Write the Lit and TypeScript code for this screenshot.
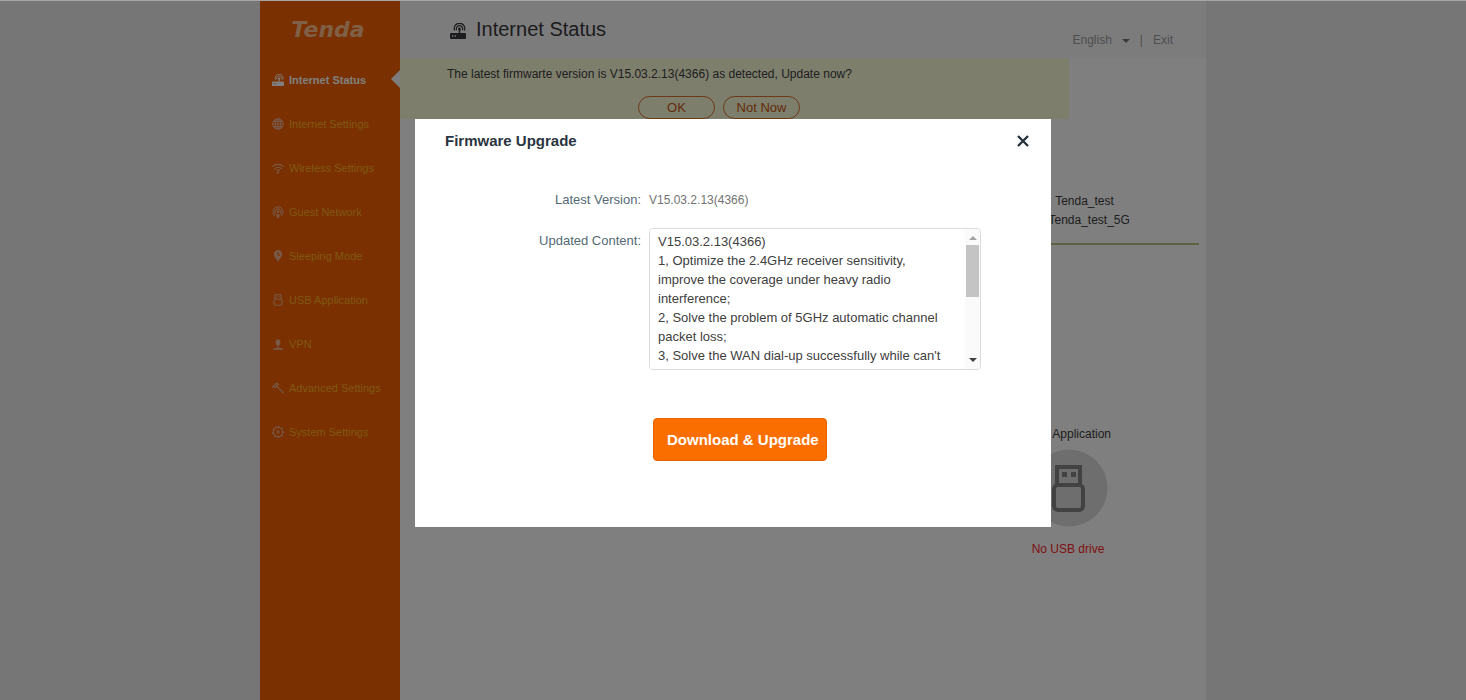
import { LitElement, html, svg, css } from "lit";
import { customElement, state } from "lit/decorators.js";

const routerIcon = svg`
  <rect x="0" y="10" width="16" height="6" rx="1"/>
  <path d="M9.5 10V6" fill="none" stroke="currentColor" stroke-width="1.6"/>
  <circle cx="9.500" cy="6" r="1.400"/>
  <path d="M6.600 7.200a3.200 3.200 0 1 1 5.800 0M4.600 7.600a5.300 5.300 0 1 1 9.800 0" fill="none" stroke="currentColor" stroke-width="1.200"/>
  <path d="M2 13h1.300M4.600 13h1.300" stroke="var(--hole)" stroke-width="1.300"/>`;

const icons: Record<string, unknown> = {
  status: routerIcon,
  globe: svg`<g fill="none" stroke="currentColor" stroke-width="1.400"><circle cx="8" cy="8" r="7"/><ellipse cx="8" cy="8" rx="3.400" ry="7"/><path d="M8 1v14M1 8h14M2.400 4.500h11.200M2.400 11.500h11.200"/></g>`,
  wifi: svg`<g fill="none" stroke="currentColor" stroke-width="1.700"><path d="M.7 6.200a10.500 10.500 0 0 1 14.600 0M3.200 9a7 7 0 0 1 9.600 0M5.600 11.600a3.600 3.600 0 0 1 4.800 0"/></g><circle cx="8" cy="14" r="1.500"/>`,
  guest: svg`<g fill="none" stroke="currentColor" stroke-width="1.400"><path d="M4 13.400a6.800 6.800 0 1 1 8 0M5 10.600a4 4 0 1 1 6 0"/></g><circle cx="8" cy="7.600" r="1.800"/><path d="M5.800 10.500h4.400L9.400 16H6.600z"/>`,
  sleep: svg`<path fill-rule="evenodd" d="M8 0a5.600 5.600 0 0 1 5.600 5.600C13.600 9.500 9.500 12 8 16 6.500 12 2.400 9.500 2.400 5.600A5.600 5.600 0 0 1 8 0zM7.300 2.500v4l3 1.600.6-1-2.300-1.300V2.500z"/>`,
  usb: svg`<g fill="none" stroke="currentColor" stroke-width="1.500"><path d="M4 7V1h8v6"/><rect x="2.800" y="7" width="10.400" height="8" rx="1.500"/></g><path d="M5.800 3h1.600v1.600H5.800zM8.600 3h1.600v1.600H8.600z"/>`,
  vpn: svg`<path d="M8 1.500c2.200 0 3.300 1.700 3.300 3.800S10 9.300 9.200 9.800v2H6.800v-2C6 9.300 4.700 7.400 4.700 5.300S5.800 1.500 8 1.500z"/><path d="M1 15.500c0-1.700 3.500-3 7-3s7 1.300 7 3z"/>`,
  tool: svg`<path fill="none" stroke="currentColor" stroke-width="1.700" d="M1 6.500 5.800 1.600 8.500 3 4 7.500zM6.500 5.500l8.800 9.300"/>`,
  gear: svg`<g fill="none" stroke="currentColor" stroke-width="1.400"><circle cx="8" cy="8" r="6.400"/><circle cx="8" cy="8" r="1.600"/><path stroke-width="2" stroke-dasharray="2 3" d="M8 .9a7.100 7.100 0 1 1 0 14.200A7.100 7.100 0 1 1 8 .9"/></g>`,
};

const menu = [
  { icon: "status", label: "Internet Status" },
  { icon: "globe", label: "Internet Settings" },
  { icon: "wifi", label: "Wireless Settings" },
  { icon: "guest", label: "Guest Network" },
  { icon: "sleep", label: "Sleeping Mode" },
  { icon: "usb", label: "USB Application" },
  { icon: "vpn", label: "VPN" },
  { icon: "tool", label: "Advanced Settings" },
  { icon: "gear", label: "System Settings" },
];

const notes = `V15.03.2.13(4366)
1, Optimize the 2.4GHz receiver sensitivity, improve the coverage under heavy radio interference;
2, Solve the problem of 5GHz automatic channel packet loss;
3, Solve the WAN dial-up successfully while can't`;

@customElement("side-menu")
class SideMenu extends LitElement {
  @state() active = 0;

  static styles = css`
    :host { display: block; background: #f46000; --hole: #f46000; }
    .logo {
      padding-top: 18px; text-align: center; color: #ffbf8c;
      font: italic bold 22px/24px "DejaVu Sans", sans-serif;
      margin-right: 4px;
    }
    nav { padding-top: 16px; }
    a {
      display: flex; align-items: center; gap: 5px; height: 44px; padding-left: 12px;
      position: relative; color: #ffb028; font-size: 11px; text-decoration: none;
    }
    svg { width: 12px; height: 12px; fill: currentColor; color: #f0b08c; flex: none; }
    .active { color: #fff; font-weight: bold; }
    .active svg { color: #fff; }
    .active::after {
      content: ""; position: absolute; right: 0; top: 12px;
      border: 9px solid transparent; border-left: 0; border-right-color: #fafafc;
    }
  `;

  render() {
    return html`
      <div class="logo">Tenda</div>
      <nav>
        ${menu.map((m, i) => html`
          <a href="#" class=${i === this.active ? "active" : ""} @click=${() => (this.active = i)}>
            <svg viewBox="0 0 16 16" aria-hidden="true">${icons[m.icon]}</svg>${m.label}
          </a>`)}
      </nav>`;
  }
}

@customElement("upgrade-dialog")
class UpgradeDialog extends LitElement {
  static styles = css`
    :host { display: block; width: 636px; max-width: 95vw; background: #fff; padding-bottom: 66px; }
    header { display: flex; justify-content: space-between; align-items: center; padding: 10px 20px 0 30px; }
    h2 { margin: 0; font-size: 15px; line-height: 24px; color: #2a3440; }
    .close { border: 0; background: none; padding: 0; width: 16px; height: 16px; display: grid; place-items: center; }
    .close svg { width: 12px; height: 12px; }
    .form { display: grid; grid-template-columns: 226px 332px; column-gap: 8px; padding-top: 37px; row-gap: 18px; }
    .label { text-align: right; font-size: 13px; line-height: 20px; color: #536a74; }
    .notes-label { padding-top: 3px; }
    .value { font-size: 12px; line-height: 20px; color: #747474; }
    .notes { display: flex; height: 142px; border: 1px solid #dcdcdc; border-radius: 4px; box-sizing: border-box; overflow: hidden; }
    textarea {
      flex: 1; min-width: 0; border: 0; outline: 0; resize: none; scrollbar-width: none; background: #fff;
      padding: 3px 14px 3px 8px; color: #404040; font: 13px/19px "Liberation Sans", Arial, sans-serif;
    }
    .bar { width: 15px; background: #fafafa; display: flex; flex-direction: column; align-items: center; padding: 0 1px; box-sizing: border-box; }
    .bar svg { width: 8px; height: 16px; flex: none; }
    .thumb { width: 13px; height: 52px; background: #c4c4c4; margin-bottom: auto; }
    .go {
      margin: 48px 0 0 238px; padding: 0 7px 0 13px; height: 43px; display: block; border: 1px solid #e86400;
      border-radius: 4px; background: #fa6e00; color: #fff; white-space: nowrap;
      font: bold 15px/20px "Liberation Sans", Arial, sans-serif;
    }
  `;

  render() {
    return html`
      <header>
        <h2>Firmware Upgrade</h2>
        <button class="close" aria-label="Close">
          <svg viewBox="0 0 12 12"><path d="M1 1l10 10M11 1L1 11" stroke="#26333c" stroke-width="2.400"/></svg>
        </button>
      </header>
      <div class="form">
        <span class="label">Latest Version:</span>
        <span class="value">V15.03.2.13(4366)</span>
        <label class="label notes-label" for="notes">Updated Content:</label>
        <div class="notes">
          <textarea id="notes" readonly .value=${notes}></textarea>
          <div class="bar" aria-hidden="true">
            <svg viewBox="0 0 8 16"><path d="M0 11l4-4 4 4z" fill="#a3a3a3"/></svg>
            <div class="thumb"></div>
            <svg viewBox="0 0 8 16"><path d="M0 5l4 4 4-4z" fill="#404040"/></svg>
          </div>
        </div>
      </div>
      <button class="go">Download &amp; Upgrade</button>`;
  }
}

@customElement("app-root")
class AppRoot extends LitElement {
  static styles = css`
    :host {
      display: block; min-height: 100vh; background: #ececec; color: #3c3c3c;
      font: 12px/19px "Liberation Sans", Arial, sans-serif;
    }
    .page { max-width: 946px; min-height: 100vh; margin: 0 auto; display: grid; grid-template-columns: 140px 1fr; }
    main { background: #fff; }
    .top { display: flex; justify-content: space-between; height: 58px; background: #f9f9fb; padding: 0 33px 0 50px; box-sizing: border-box; --hole: #f9f9fb; }
    h1 { display: flex; gap: 10px; margin: 0; padding-top: 17px; font-weight: normal; font-size: 20px; line-height: 24px; color: #38383c; }
    h1 svg { width: 16px; height: 16px; margin-top: 6px; fill: currentColor; }
    .account { display: flex; gap: 10px; padding-top: 31px; color: #9c9c9c; }
    .lang { display: flex; align-items: center; gap: 10px; height: 19px; padding: 0; border: 0; background: none; color: inherit; font: inherit; }
    .lang svg { width: 8px; height: 4px; fill: #777; }
    .account a { color: inherit; text-decoration: none; }
    .banner { width: 83%; height: 61px; background: #fcfcda; padding: 7px 0 0 47px; box-sizing: border-box; }
    .banner p { margin: 0; }
    .choices { display: flex; gap: 8px; padding: 12px 0 0 191px; }
    .choices button {
      width: 77px; height: 23px; padding: 0 0 1px; border: 1px solid #d87030; border-radius: 12px; background: none;
      color: #c85810; font: 13px/19px "Liberation Sans", Arial, sans-serif;
    }
    .wifi { margin: 0 7px 0 47px; padding: 73px 0 13px; border-bottom: 2px solid #b9c780; display: flex; justify-content: flex-end; }
    .wifi div { width: 191px; }
    .usb { width: 120px; margin: 180px 78px 0 auto; text-align: center; display: flex; flex-direction: column; align-items: center; }
    .usb svg { width: 78px; height: 78px; margin: 5px 0 13px 2px; }
    .none { color: #ff1c24; }
    .veil {
      position: fixed; inset: 0; background: rgba(0, 0, 0, 0.5); border-top: 1px solid #a4a6a4;
      display: flex; justify-content: center; align-items: flex-start; padding-top: 118px; background-clip: padding-box;
    }
  `;

  render() {
    return html`
      <div class="page">
        <side-menu></side-menu>
        <main>
          <div class="top">
            <h1><svg viewBox="0 0 16 16" aria-hidden="true">${routerIcon}</svg>Internet Status</h1>
            <div class="account">
              <button class="lang">English<svg viewBox="0 0 8 4"><path d="M0 0h8L4 4z"/></svg></button>
              <span>|</span>
              <a href="#">Exit</a>
            </div>
          </div>
          <div class="banner">
            <p>The latest firmwarte version is V15.03.2.13(4366) as detected, Update now?</p>
            <div class="choices"><button>OK</button><button>Not Now</button></div>
          </div>
          <section class="wifi">
            <div>2.4GHz: Tenda_test<br>5 GHz: Tenda_test_5G</div>
          </section>
          <section class="usb">
            <span>USB Application</span>
            <svg viewBox="0 0 78 78" aria-hidden="true">
              <circle cx="39" cy="39" r="38.500" fill="#dcdcdc"/>
              <g fill="none" stroke="#848484" stroke-width="4">
                <path d="M27 35V18h23v17"/><rect x="24" y="36" width="29" height="25" rx="4"/>
              </g>
              <path d="M32 23h5v5h-5zM41 23h5v5h-5z" fill="#848484"/>
            </svg>
            <span class="none">No USB drive</span>
          </section>
        </main>
      </div>
      <div class="veil"><upgrade-dialog role="dialog" aria-label="Firmware Upgrade"></upgrade-dialog></div>`;
  }
}
